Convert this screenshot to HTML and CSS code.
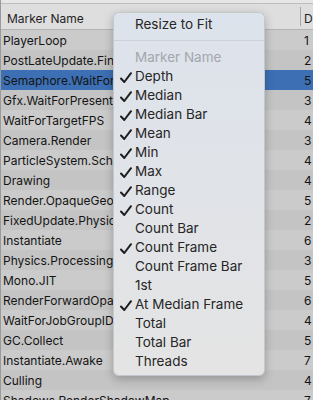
FILE: index.html
```html
<!DOCTYPE html>
<html lang="en">

<head>
  <meta charset="UTF-8" />
  <meta name="viewport" content="width=device-width, initial-scale=1.0" />
  <title>Profiler Markers</title>
  <link rel="stylesheet" href="styles.css">
</head>

<body>
  <div class="table">
    <div class="table-top"></div>
    <div class="table-header">
      <div class="col-name">Marker Name</div>
      <div class="col-depth">D</div>
    </div>

    <div class="row"><span class="col-name">PlayerLoop</span><span class="col-depth">1</span></div>
    <div class="row"><span class="col-name">PostLateUpdate.FinishFrameRendering</span><span class="col-depth">2</span></div>
    <div class="row selected"><span class="col-name">Semaphore.WaitForSignal</span><span class="col-depth">5</span></div>
    <div class="row"><span class="col-name">Gfx.WaitForPresentOnGfxThread</span><span class="col-depth">3</span></div>
    <div class="row"><span class="col-name">WaitForTargetFPS</span><span class="col-depth">4</span></div>
    <div class="row"><span class="col-name">Camera.Render</span><span class="col-depth">3</span></div>
    <div class="row"><span class="col-name">ParticleSystem.ScheduleGeometryJobs</span><span class="col-depth">4</span></div>
    <div class="row"><span class="col-name">Drawing</span><span class="col-depth">4</span></div>
    <div class="row"><span class="col-name">Render.OpaqueGeometry</span><span class="col-depth">5</span></div>
    <div class="row"><span class="col-name">FixedUpdate.PhysicsFixedUpdate</span><span class="col-depth">2</span></div>
    <div class="row"><span class="col-name">Instantiate</span><span class="col-depth">6</span></div>
    <div class="row"><span class="col-name">Physics.Processing</span><span class="col-depth">3</span></div>
    <div class="row"><span class="col-name">Mono.JIT</span><span class="col-depth">5</span></div>
    <div class="row"><span class="col-name">RenderForwardOpaque.Render</span><span class="col-depth">6</span></div>
    <div class="row"><span class="col-name">WaitForJobGroupID</span><span class="col-depth">4</span></div>
    <div class="row"><span class="col-name">GC.Collect</span><span class="col-depth">5</span></div>
    <div class="row"><span class="col-name">Instantiate.Awake</span><span class="col-depth">7</span></div>
    <div class="row"><span class="col-name">Culling</span><span class="col-depth">4</span></div>
    <div class="row"><span class="col-name">Shadows.RenderShadowMap</span><span class="col-depth">7</span></div>
  </div>

  <!-- column context menu -->
  <div class="menu" role="menu">
    <div class="menu-item">Resize to Fit</div>
    <div class="menu-sep"></div>
    <div class="menu-item disabled">Marker Name</div>
    <div class="menu-item checked">Depth</div>
    <div class="menu-item checked">Median</div>
    <div class="menu-item checked">Median Bar</div>
    <div class="menu-item checked">Mean</div>
    <div class="menu-item checked">Min</div>
    <div class="menu-item checked">Max</div>
    <div class="menu-item checked">Range</div>
    <div class="menu-item checked">Count</div>
    <div class="menu-item">Count Bar</div>
    <div class="menu-item checked">Count Frame</div>
    <div class="menu-item">Count Frame Bar</div>
    <div class="menu-item">1st</div>
    <div class="menu-item checked">At Median Frame</div>
    <div class="menu-item">Total</div>
    <div class="menu-item">Total Bar</div>
    <div class="menu-item">Threads</div>
  </div>

  <script>
    // add a check glyph to every checked item
    const check = '<svg class="check" width="12" height="12" viewBox="0 0 12 12"><path d="M1 6.5 L4.3 10 L11 1.2" fill="none" stroke="#1e1e1e" stroke-width="2" stroke-linecap="round" stroke-linejoin="round"/></svg>';
    document.querySelectorAll('.menu-item.checked').forEach(item => {
      item.insertAdjacentHTML('afterbegin', check);
    });
  </script>
</body>

</html>
```

FILE: styles.css
```css
body {
  margin: 0;
  font-family: Inter, "Liberation Sans", sans-serif;
  background: #c8c8c8;
  overflow: hidden;
}

.table {
  width: 313px;
  border-left: 1px solid #9a9a9a;
  box-sizing: border-box;
}

.table-top {
  height: 3px;
  background: #e6e6e6;
  border-bottom: 1px solid #bdbdbd;
}

.table-header {
  display: flex;
  align-items: center;
  height: 25px;
  background: #dedede;
  border-bottom: 1px solid #b4b4b4;
  font-size: 12px;
  color: #1f1f1f;
}

.table-header .col-name {
  flex: 1;
  height: 19px;
  padding-left: 6px;
  padding-top: 4px;
  box-sizing: border-box;
  display: flex;
  align-items: center;
  border-right: 1px solid #a8a8a8;
  white-space: nowrap;
}

.table-header .col-depth {
  width: 9px;
  padding-left: 3px;
  padding-top: 4px;
  white-space: nowrap;
  overflow: hidden;
}

.row {
  display: flex;
  align-items: center;
  height: 20px;
  font-size: 12px;
  color: #141414;
  background: #cbcbcb;
}

.row:nth-of-type(even) {
  background: #c4c4c4;
}

.row.selected {
  background: #3c6fb3;
}

.row .col-name {
  flex: 1;
  padding-left: 2px;
  white-space: nowrap;
  overflow: hidden;
}

.row .col-depth {
  width: 9px;
  padding-left: 4px;
}

.menu {
  position: absolute;
  left: 113px;
  top: 12px;
  width: 150px;
  padding: 2px 0 4px;
  border-radius: 6px;
  background: linear-gradient(180deg, #dde3ec 0%, #e0e3e8 45%, #e4e4e4 100%);
  border: 1px solid rgba(0, 0, 0, 0.12);
  box-shadow: 0 3px 10px rgba(0, 0, 0, 0.25);
  font-size: 13.5px;
  color: #262626;
}

.menu-item {
  position: relative;
  height: 19px;
  line-height: 19px;
  padding-left: 21px;
  white-space: nowrap;
}

.menu-item.disabled {
  color: #a3a6ab;
}

.menu-sep {
  height: 1px;
  margin: 6px 0 7px;
  background: #cdd1d7;
}

.check {
  position: absolute;
  left: 6px;
  top: 5px;
}
```
